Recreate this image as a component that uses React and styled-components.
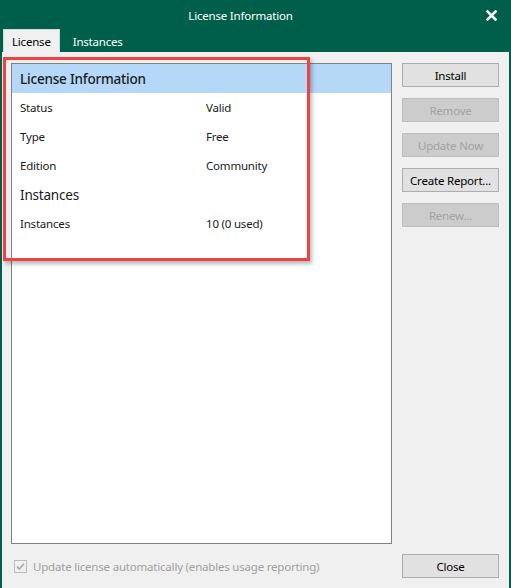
import React from "react";
import styled, { createGlobalStyle } from "styled-components";

const Global = createGlobalStyle`
  html, body { margin: 0; padding: 0; background: #ffffff; }
  body {
    font-family: "Segoe UI", "Noto Sans", "Open Sans", sans-serif;
    font-size: 11.5px;
    letter-spacing: -0.2px;
  }
  * { box-sizing: border-box; }
`;

const Window = styled.div`
  position: relative;
  width: 511px;
  height: 588px;
  background: #005f4a;
  padding: 0 2px 0 2px;
  display: flex;
  flex-direction: column;
  overflow: hidden;
`;

const TitleBar = styled.div`
  height: 30px;
  display: flex;
  align-items: center;
  justify-content: center;
  position: relative;
  padding-right: 30px;
  color: #ffffff;
  font-size: 11.5px;
`;

const CloseX = styled.svg`
  position: absolute;
  right: 12px;
  top: 10px;
  width: 11px;
  height: 11px;
`;

const TabStrip = styled.div`
  height: 22px;
  display: flex;
  align-items: flex-end;
  padding-left: 1px;
`;

const Tab = styled.div`
  height: ${(p) => (p.$active ? "23px" : "22px")};
  padding: 0 ${(p) => (p.$active ? "8px" : "12px")};
  display: flex;
  align-items: center;
  color: ${(p) => (p.$active ? "#000000" : "#ffffff")};
  background: ${(p) => (p.$active ? "#f0f0f0" : "transparent")};
  border: ${(p) => (p.$active ? "1px solid #d9d9d9" : "1px solid transparent")};
  border-bottom: none;
`;

const Body = styled.div`
  flex: 1;
  background: #f0f0f0;
  display: grid;
  grid-template-columns: 381px 97px;
  grid-template-rows: 481px 24px;
  column-gap: 10px;
  row-gap: 10px;
  padding: 11px 0 0 9px;
`;

const ListBox = styled.div`
  background: #ffffff;
  border: 1px solid #828282;
  display: flex;
  flex-direction: column;
`;

const Row = styled.div`
  height: 29px;
  display: grid;
  grid-template-columns: 186px 1fr;
  align-items: center;
  padding-left: 8px;
  font-size: ${(p) => (p.$heading ? "13.5px" : "11.5px")};
  font-weight: ${(p) => (p.$heading && p.$selected ? 500 : 400)};
  color: #1a1a1a;
  background: ${(p) => (p.$selected ? "#b5d7f8" : "transparent")};
`;

const ButtonColumn = styled.div`
  display: flex;
  flex-direction: column;
  gap: 11px;
`;

const Button = styled.div`
  height: 24px;
  width: 97px;
  display: flex;
  align-items: center;
  justify-content: center;
  color: ${(p) => (p.$disabled ? "#a3a3a3" : "#000000")};
  background: ${(p) => (p.$disabled ? "#cccccc" : "#e1e1e1")};
  border: 1px solid ${(p) => (p.$disabled ? "#bfbfbf" : "#adadad")};
`;

const CheckRow = styled.div`
  display: flex;
  align-items: center;
  gap: 6px;
  padding-left: 3px;
  color: #a0a0a0;
`;

const Highlight = styled.div`
  position: absolute;
  left: 3px;
  top: 57px;
  width: 307px;
  height: 204px;
  border: 3px solid #ef4343;
  box-shadow: 2px 3px 4px rgba(0, 0, 0, 0.28);
  pointer-events: none;
`;

const rows = [
  { label: "License Information", heading: true, selected: true },
  { label: "Status", value: "Valid" },
  { label: "Type", value: "Free" },
  { label: "Edition", value: "Community" },
  { label: "Instances", heading: true },
  { label: "Instances", value: "10 (0 used)" },
];

const buttons = [
  { label: "Install" },
  { label: "Remove", disabled: true },
  { label: "Update Now", disabled: true },
  { label: "Create Report..." },
  { label: "Renew...", disabled: true },
];

export default function App() {
  return (
    <>
      <Global />
      <Window>
        <TitleBar>
          License Information
          <CloseX viewBox="0 0 11 11">
            <path d="M1.5 1.5 L9.5 9.5 M9.5 1.5 L1.5 9.5" stroke="#ffffff" strokeWidth="2.6" strokeLinecap="square" />
          </CloseX>
        </TitleBar>
        <TabStrip>
          <Tab $active>License</Tab>
          <Tab>Instances</Tab>
        </TabStrip>
        <Body>
          <ListBox>
            {rows.map((r, i) => (
              <Row key={i} $heading={r.heading} $selected={r.selected}>
                <span>{r.label}</span>
                <span>{r.value || ""}</span>
              </Row>
            ))}
          </ListBox>
          <ButtonColumn>
            {buttons.map((b) => (
              <Button key={b.label} $disabled={b.disabled}>
                {b.label}
              </Button>
            ))}
          </ButtonColumn>
          <CheckRow>
            <svg width="13" height="13" viewBox="0 0 13 13">
              <rect x="0.5" y="0.5" width="12" height="12" fill="#f0f0f0" stroke="#bcbcbc" />
              <path d="M3 6.5 L5.3 9 L10 3.8" fill="none" stroke="#a8a8a8" strokeWidth="1.6" />
            </svg>
            <span>Update license automatically (enables usage reporting)</span>
          </CheckRow>
          <Button>Close</Button>
        </Body>
        <Highlight />
      </Window>
    </>
  );
}
